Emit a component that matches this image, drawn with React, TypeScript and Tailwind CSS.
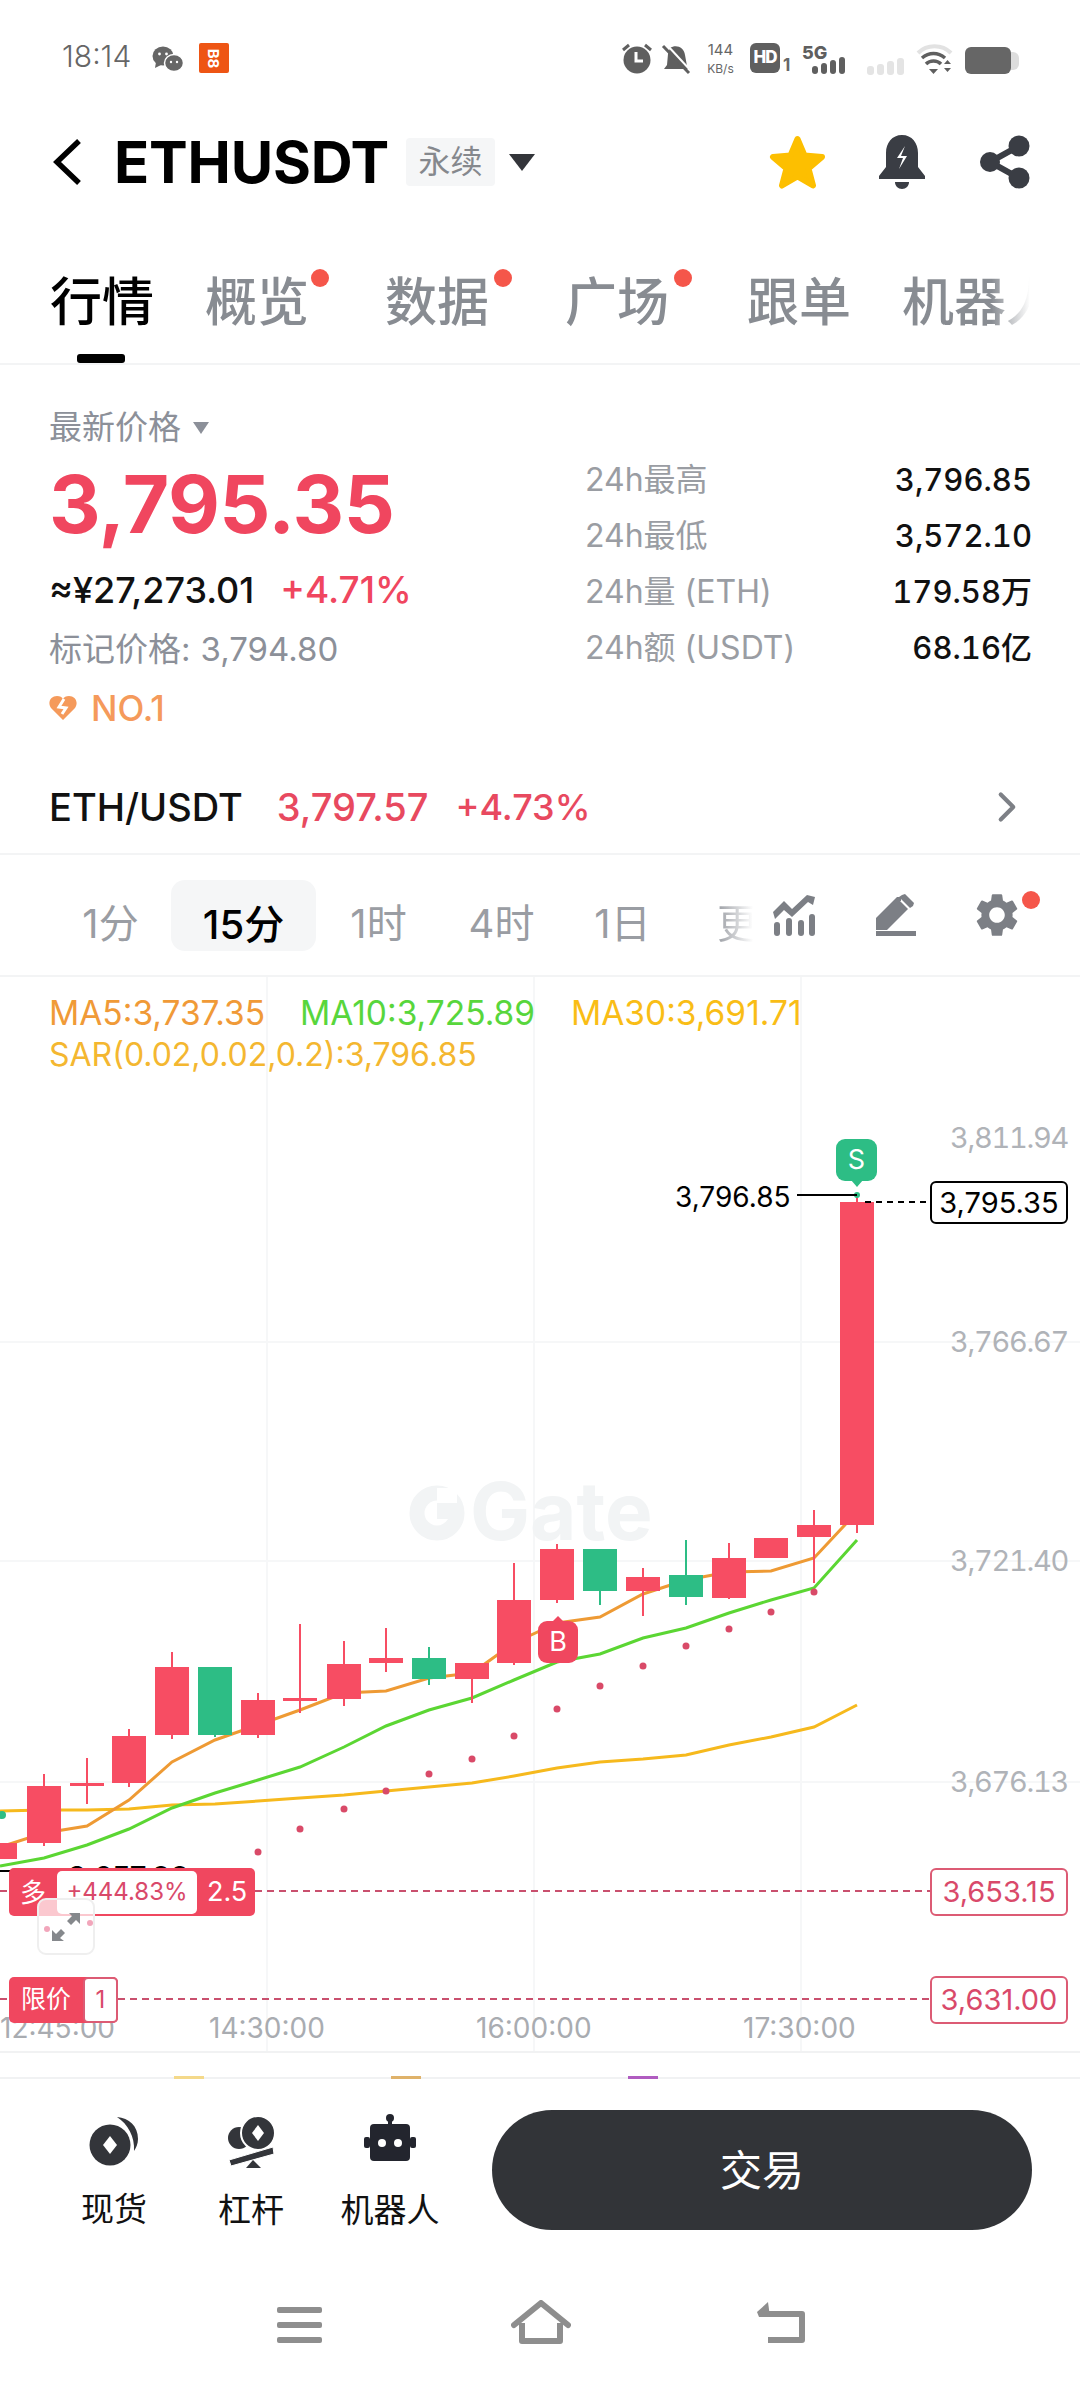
import React from 'react';
import { ChevronRight } from 'lucide-react';
import { MdSettings } from 'react-icons/md';

const RED = '#f74d63';
const GREEN = '#2dbd85';

// x, bodyTop, bodyBottom, wickTop, wickBottom, green?
const candles: [number, number, number, number, number, boolean?][] = [
  [0, 1843, 1859, 1843, 1859],
  [44, 1786, 1843, 1774, 1846],
  [87, 1783, 1786, 1758, 1804],
  [129, 1736, 1783, 1729, 1787],
  [172, 1667, 1735, 1652, 1739],
  [215, 1667, 1735, 1667, 1737, true],
  [258, 1700, 1735, 1693, 1738],
  [300, 1698, 1700, 1624, 1713],
  [344, 1664, 1699, 1641, 1706],
  [386, 1658, 1663, 1628, 1672],
  [429, 1658, 1679, 1647, 1685, true],
  [472, 1663, 1679, 1663, 1703],
  [514, 1600, 1663, 1563, 1665],
  [557, 1549, 1600, 1544, 1603],
  [600, 1549, 1591, 1549, 1605, true],
  [643, 1577, 1591, 1568, 1616],
  [686, 1575, 1597, 1540, 1605, true],
  [729, 1558, 1598, 1543, 1599],
  [771, 1538, 1558, 1538, 1558],
  [814, 1525, 1537, 1510, 1583],
  [857, 1202, 1525, 1195, 1533],
];

const xs = [0, 44, 87, 129, 172, 215, 258, 300, 344, 386, 429, 472, 514, 557, 600, 643, 686, 729, 771, 814, 857];
const ma5 = [1847, 1833, 1826, 1800, 1762, 1740, 1725, 1710, 1693, 1691, 1678, 1673, 1643, 1623, 1617, 1594, 1580, 1572, 1571, 1558, 1512];
const ma10 = [1866, 1858, 1845, 1829, 1808, 1793, 1780, 1767, 1747, 1726, 1710, 1698, 1680, 1662, 1654, 1638, 1628, 1613, 1600, 1588, 1540];
const ma30 = [1811, 1810, 1810, 1809, 1805, 1804, 1801, 1798, 1795, 1791, 1787, 1783, 1776, 1768, 1762, 1759, 1755, 1745, 1737, 1727, 1705];
const sar: [number, number][] = [
  [258, 1852], [300, 1829], [344, 1809], [386, 1791], [429, 1774], [472, 1759], [514, 1736], [557, 1709],
  [600, 1686], [643, 1666], [686, 1646], [729, 1629], [771, 1612], [814, 1592],
];

const toPoints = (ys: number[]) => ys.map((y, i) => `${xs[i]},${y}`).join(' ');

const stats = [
  ['24h最高', '3,796.85'],
  ['24h最低', '3,572.10'],
  ['24h量 (ETH)', '179.58万'],
  ['24h额 (USDT)', '68.16亿'],
];

const StatusBar = () => (
  <div className="flex h-[110px] items-start pt-[43px] pl-[62px] text-[#666]">
    <span className="w-[90px] text-[30px] leading-[26px] font-light">18:14</span>
    <svg width="32" height="28" viewBox="0 0 32 28" className="mt-[3px] fill-[#666]">
      <ellipse cx="11" cy="10" rx="10.5" ry="9.5" />
      <path d="M4 16l-1 6 6-3z" />
      <ellipse cx="22" cy="17" rx="9.5" ry="8.5" stroke="#fff" strokeWidth="1.5" />
      <circle cx="7.5" cy="8" r="1.4" fill="#fff" />
      <circle cx="14.5" cy="8" r="1.4" fill="#fff" />
      <circle cx="19" cy="16" r="1.2" fill="#fff" />
      <circle cx="25" cy="16" r="1.2" fill="#fff" />
    </svg>
    <div className="ml-[15px] flex h-[30px] w-[30px] items-center justify-center rounded-[2px] bg-[#ee5514] text-[15px] leading-none font-bold text-white">
      <span className="rotate-90">B8</span>
    </div>
    <svg width="70" height="32" viewBox="0 0 70 32" className="ml-[393px] fill-[#5f5f5f]">
      <circle cx="15" cy="17" r="13.5" />
      <path d="M14 9v9h7" fill="none" stroke="#fff" strokeWidth="3" />
      <path d="M1 7l6-5M29 7l-6-5" stroke="#5f5f5f" strokeWidth="3" />
      <path d="M48 5c6-4 14-1 15 7l2 11 3 3H42l3-4 1-11z" />
      <path d="M41 3l26 27" stroke="#5f5f5f" strokeWidth="3" />
      <path d="M45 2l25 27" stroke="#fff" strokeWidth="2" />
    </svg>
    <div className="ml-[12px] flex w-[33px] flex-col items-center text-[#666]">
      <span className="mt-[-2px] text-[15px] leading-[18px]">144</span>
      <span className="mt-[3px] text-[12px] leading-[14px]">KB/s</span>
    </div>
    <div className="ml-[13px] flex h-[30px] w-[30px] items-center justify-center rounded-[6px] bg-[#5f5f5f] text-[17px] font-extrabold tracking-[-1px] text-white">
      HD
    </div>
    <span className="mt-[12px] ml-[3px] text-[17px] leading-[20px] font-bold">1</span>
    <svg width="46" height="32" viewBox="0 0 46 32" className="ml-[12px]">
      <text x="0" y="16" fontSize="18" fontWeight="800" fill="#5f5f5f" fontFamily="Inter">5G</text>
      <g fill="#5f5f5f">
        <rect x="10" y="23" width="6" height="8" rx="3" />
        <rect x="19" y="20" width="6" height="11" rx="3" />
        <rect x="28" y="17" width="6" height="14" rx="3" />
        <rect x="37" y="14" width="6" height="17" rx="3" />
      </g>
    </svg>
    <svg width="38" height="18" viewBox="0 0 38 18" className="mt-[14px] ml-[19px] fill-[#e4e4e4]">
      <rect x="0" y="9" width="7" height="9" rx="3" />
      <rect x="10" y="7" width="7" height="11" rx="3" />
      <rect x="20" y="4" width="7" height="14" rx="3" />
      <rect x="30" y="1" width="7" height="17" rx="3" />
    </svg>
    <svg width="38" height="32" viewBox="0 0 38 32" className="ml-[11px]" fill="none">
      <path d="M2 10c9-9 24-9 33 0" stroke="#e2e2e2" strokeWidth="4" />
      <path d="M6 15c7-6 16-6 23 0M10 21c4-4 11-4 15 0" stroke="#5f5f5f" strokeWidth="3.5" />
      <path d="M13 26h9l-4.500 5z" fill="#5f5f5f" />
      <path d="M28 21l3.500-4 3.500 4zM28 25h7l-3.500 4z" fill="#5f5f5f" />
    </svg>
    <div className="mt-[4px] ml-[11px] flex items-center">
      <div className="h-[27px] w-[46px] rounded-[6px] bg-[#666]" />
      <div className="h-[18px] w-[8px] rounded-r-[6px] bg-[#ddd]" />
    </div>
  </div>
);

const Header = () => (
  <div className="flex h-[104px] items-center pr-[50px]">
    <svg width="30" height="48" viewBox="0 0 30 48" className="ml-[52px] shrink-0" fill="none" stroke="#000" strokeWidth="5.500">
      <path d="M27 3L5 24l22 21" />
    </svg>
    <h1 className="ml-[32px] text-[58px] leading-none font-bold tracking-[-0.2px] text-black">ETHUSDT</h1>
    <span className="ml-[17px] flex h-[48px] w-[89px] items-center justify-center rounded-[4px] bg-[#f5f6f7] text-[32px] text-[#85888d]">
      永续
    </span>
    <svg width="26" height="17" viewBox="0 0 26 17" className="ml-[14px] fill-[#33353a]">
      <path d="M0 0h26L13 17z" />
    </svg>
    <svg width="57" height="54" viewBox="0 0 57 54" className="mr-[52px] ml-auto">
      <path
        d="M28.500 4l7 16.500 17.500 1.500-13.500 11.500 4.500 17-15.500-9-15.500 9 4.500-17L4 22l17.500-1.500z"
        fill="#fdbf00"
        stroke="#fdbf00"
        strokeWidth="6"
        strokeLinejoin="round"
      />
    </svg>
    <svg width="48" height="54" viewBox="0 0 48 54" className="mr-[54px]">
      <path d="M24 0c10 0 16 8 16 18v14l7 9v3H1v-3l7-9V18C8 8 14 0 24 0z" fill="#3a3d44" />
      <path d="M17 47h14c0 4-3 7-7 7s-7-3-7-7z" fill="#3a3d44" />
      <path d="M27 11l-8 12h6l-4 11 8-13h-6z" fill="#fff" />
    </svg>
    <svg width="50" height="54" viewBox="0 0 50 54" fill="#3a3d44">
      <path d="M39 11L10 27l29 16" fill="none" stroke="#3a3d44" strokeWidth="6" />
      <circle cx="39" cy="11" r="10.500" />
      <circle cx="10" cy="27" r="10" />
      <circle cx="39" cy="43" r="10.500" />
    </svg>
  </div>
);

const Tabs = () => (
  <div className="relative flex h-[151px] items-start overflow-hidden border-b-2 border-[#f3f4f5] pt-[62px] pl-[50px] text-[52px] leading-[54px] font-medium text-[#888c92]">
    <div className="w-[155px] text-black">行情</div>
    <div className="relative w-[180px]">
      概览
      <span className="absolute top-[-7px] left-[106px] h-[18px] w-[18px] rounded-full bg-[#f5564a]" />
    </div>
    <div className="relative w-[180px]">
      数据
      <span className="absolute top-[-7px] left-[109px] h-[18px] w-[18px] rounded-full bg-[#f5564a]" />
    </div>
    <div className="relative w-[182px]">
      广场
      <span className="absolute top-[-7px] left-[109px] h-[18px] w-[18px] rounded-full bg-[#f5564a]" />
    </div>
    <div className="w-[155px]">跟单</div>
    <div className="w-[128px] shrink-0 overflow-hidden whitespace-nowrap bg-gradient-to-r from-[#888c92] from-70% to-transparent to-100% bg-clip-text text-transparent">
      机器人
    </div>
    <div className="absolute bottom-0 left-[77px] h-[9px] w-[48px] rounded-[3px] bg-black" />
  </div>
);

const PriceBlock = () => (
  <div className="flex h-[396px] justify-between pt-[36px] pr-[48px] pl-[49px]">
    <div>
      <div className="flex h-[48px] translate-y-[3px] items-center text-[33px] text-[#8c9099]">
        最新价格
        <svg width="16" height="12" viewBox="0 0 16 12" className="ml-[12px] fill-[#8c9099]">
          <path d="M0 0h16L8 12z" />
        </svg>
      </div>
      <div className="flex h-[110px] items-center text-[80px] leading-none font-bold tracking-[-0.5px] text-[#f0465f]">
        3,795.35
      </div>
      <div className="flex h-[62px] items-center text-[36px] font-medium text-[#111]">
        ≈¥27,273.01
        <span className="ml-[26px] text-[37px] text-[#f0465f]">+4.71%</span>
      </div>
      <div className="flex h-[58px] items-center text-[33px] text-[#8c9099]">
        标记价格:
        <span className="ml-[10px] text-[33px]">3,794.80</span>
      </div>
      <div className="flex h-[58px] items-center text-[35px] font-medium text-[#f59a5b]">
        <svg width="28" height="26" viewBox="0 0 28 26" className="mr-[14px]">
          <path d="M14 25L2 13C-2 7 2 1 8 1c3 0 5 1 6 3 1-2 3-3 6-3 6 0 10 6 6 12z" fill="#f59a5b" />
          <path d="M15 4l-5 8 7 1-4 6" fill="none" stroke="#fff" strokeWidth="3" />
        </svg>
        NO.1
      </div>
    </div>
    <div className="w-[447px] pt-[51px]">
      {stats.map(([label, value]) => (
        <div key={label} className="flex h-[56px] items-center justify-between">
          <span className="text-[32px] text-[#9a9da3]">{label}</span>
          <span className="text-[31px] font-medium text-[#111] tabular-nums">{value}</span>
        </div>
      ))}
    </div>
  </div>
);

const PairRow = () => (
  <div className="flex h-[94px] items-center border-b-2 border-[#f3f4f5] pr-[48px] pl-[49px] text-[38px] font-medium">
    <span className="text-[#111]">ETH/USDT</span>
    <span className="ml-[34px] text-[#e8495f]">3,797.57</span>
    <span className="ml-[27px] text-[36px] text-[#e8495f]">+4.73%</span>
    <ChevronRight size={50} strokeWidth={2} className="ml-auto text-[#7d8086]" />
  </div>
);

const Intervals = () => (
  <div className="relative flex h-[122px] items-center border-b-2 border-[#f3f4f5] pl-[50px] text-[40px] text-[#9a9da3]">
    <div className="w-[121px] pt-[18px] text-center">1分</div>
    <div className="h-[71px] w-[145px] rounded-[14px] bg-[#f5f6f7] pt-[10px] text-center leading-[70px] font-medium text-black">
      15分
    </div>
    <div className="w-[125px] pt-[18px] text-center">1时</div>
    <div className="w-[121px] pt-[18px] text-center">4时</div>
    <div className="w-[121px] pt-[18px] text-center">1日</div>
    <div className="ml-[34px] w-[36px] overflow-hidden bg-gradient-to-r from-[#9a9da3] to-transparent bg-clip-text pt-[18px] whitespace-nowrap text-transparent">
      更多
    </div>
    <svg width="44" height="42" viewBox="0 0 44 42" className="ml-[19px]" fill="#7c7f85">
      <path d="M1 18l11-11 8 8L35 1l8 2-2 8-5-3-16 15-8-7-9 9z" />
      <rect x="2" y="28" width="6" height="14" rx="3" />
      <rect x="14" y="24" width="6" height="18" rx="3" />
      <rect x="26" y="26" width="6" height="16" rx="3" />
      <rect x="37" y="20" width="6" height="22" rx="3" />
    </svg>
    <svg width="42" height="42" viewBox="0 0 42 42" className="ml-[58px]" fill="#7c7f85">
      <path d="M2 24L23 3l4 0 0 4-1 0 8 8L13 36H2z" />
      <path d="M28 1l3-1 9 9-1 3-3 2-11-11z" />
      <rect x="2" y="37" width="40" height="5" />
    </svg>
    <MdSettings size={52} className="ml-[55px] text-[#7c7f85]" />
    <span className="absolute top-[36px] left-[1022px] h-[18px] w-[18px] rounded-full bg-[#f5564a]" />
  </div>
);

const YLabel = ({ top, text }: { top: string; text: string }) => (
  <span className={`absolute right-[12px] text-[29px] leading-[32px] tracking-[-1.3px] text-[#b0b3b8] tabular-nums ${top}`}>{text}</span>
);

const TimeLabel = ({ left, text }: { left: string; text: string }) => (
  <span className={`absolute top-[1035px] text-[28px] leading-[32px] text-[#a9acb1] ${left}`}>{text}</span>
);

const Chart = () => (
  <div className="relative h-[1102px] overflow-hidden">
    <svg width="1080" height="1102" viewBox="0 977 1080 1102" className="absolute top-0 left-0">
      <g stroke="#f6f7f8" strokeWidth="2">
        <path d="M267 977V2052M534 977V2052M801 977V2052" />
        <path d="M0 1342H1080M0 1561H1080M0 1782H1080" />
      </g>
      <path d="M0 2052H1080M0 2078H1080" stroke="#f1f2f3" strokeWidth="2" />
      <path d="M174 2077.500h30" stroke="#f4d98a" strokeWidth="3" />
      <path d="M391 2077.500h30" stroke="#dfb26a" strokeWidth="3" />
      <path d="M628 2077.500h30" stroke="#b05cc0" strokeWidth="3" />

      <circle cx="437" cy="1513" r="20" fill="none" stroke="#f2f4f5" strokeWidth="15" />
      <rect x="437" y="1488" width="20" height="20" fill="#fff" />
      <rect x="437" y="1503" width="22" height="16" fill="#f2f4f5" />
      <text x="470" y="1540" fontFamily="Inter" fontWeight="700" fontSize="80" fill="#f2f4f5">Gate</text>

      <polyline points={toPoints(ma30)} fill="none" stroke="#f6b91d" strokeWidth="3" />
      <polyline points={toPoints(ma5)} fill="none" stroke="#ee9a34" strokeWidth="3" />
      <polyline points={toPoints(ma10)} fill="none" stroke="#5bd633" strokeWidth="3" />

      {candles.map(([x, top, bottom, wickTop, wickBottom, up]) => (
        <g key={x} fill={up ? GREEN : RED} stroke="none">
          <rect x={x - 1} y={wickTop} width="2" height={wickBottom - wickTop} />
          <rect x={x - 17} y={top} width="34" height={Math.max(bottom - top, 3)} />
        </g>
      ))}

      {sar.map(([x, y]) => (
        <circle key={x} cx={x} cy={y} r="3.500" fill="#d94a68" />
      ))}
      <circle cx="2" cy="1815" r="4" fill={GREEN} />
      <circle cx="857" cy="1195" r="3" fill={GREEN} />

      <path d="M797 1195h60" stroke="#000" strokeWidth="2" />
      <path d="M865 1202h65" stroke="#000" strokeWidth="2" strokeDasharray="6 5" />
      <path d="M0 1871h10" stroke="#000" strokeWidth="2" />
      <path d="M0 1891h10M255 1891h675" stroke="#c9506e" strokeWidth="2" strokeDasharray="7 5" />
      <path d="M0 1999h10M118 1999h812" stroke="#c9506e" strokeWidth="2" strokeDasharray="7 5" />
    </svg>

    <div className="relative px-[49px] pt-[15px] text-[33.500px] leading-[42px]">
      <div className="flex">
        <span className="w-[251px] text-[#f09a37]">MA5:3,737.35</span>
        <span className="w-[271px] text-[#58d63c]">MA10:3,725.89</span>
        <span className="text-[#f9bd16]">MA30:3,691.71</span>
      </div>
      <div className="text-[32px] text-[#f4b730]">SAR(0.02,0.02,0.2):3,796.85</div>
    </div>

    <YLabel top="top-[145px]" text="3,811.94" />
    <YLabel top="top-[349px]" text="3,766.67" />
    <YLabel top="top-[568px]" text="3,721.40" />
    <YLabel top="top-[789px]" text="3,676.13" />

    <span className="absolute top-[203px] left-[675px] text-[28px] leading-[34px] text-black">3,796.85</span>

    <div className="absolute top-[162px] left-[836px] flex h-[42px] w-[41px] items-center justify-center rounded-[9px] bg-[#2dbd85] text-[27px] text-white">
      S
      <span className="absolute bottom-[-6px] left-[15px] h-0 w-0 border-x-[6px] border-t-[7px] border-x-transparent border-t-[#2dbd85]" />
    </div>

    <div className="absolute top-[644px] left-[538px] flex h-[42px] w-[40px] items-center justify-center rounded-[9px] bg-[#f0475f] text-[27px] text-white">
      B
      <span className="absolute top-[-5px] left-[14px] h-0 w-0 border-x-[6px] border-b-[6px] border-x-transparent border-b-[#f0475f]" />
    </div>

    <div className="absolute top-[204px] left-[930px] flex h-[43px] w-[138px] items-center justify-center rounded-[6px] border-2 border-black bg-white text-[29px] text-black">
      3,795.35
    </div>

    <div className="absolute top-[891px] left-[930px] flex h-[48px] w-[138px] items-center justify-center rounded-[6px] border-2 border-[#dc5b74] bg-white text-[29px] text-[#d9496a]">
      3,653.15
    </div>
    <div className="absolute top-[999px] left-[930px] flex h-[48px] w-[138px] items-center justify-center rounded-[6px] border-2 border-[#dc5b74] bg-white text-[29px] text-[#d9496a]">
      3,631.00
    </div>

    <TimeLabel left="left-0" text="12:45:00" />
    <TimeLabel left="left-[209px]" text="14:30:00" />
    <TimeLabel left="left-[476px]" text="16:00:00" />
    <TimeLabel left="left-[743px]" text="17:30:00" />

    <span className="absolute top-[883px] left-[68px] text-[28px] leading-[34px] font-bold text-black">3,657.00</span>

    <div className="absolute top-[891px] left-[9px] flex h-[48px] w-[246px] items-center rounded-[5px] bg-[#f0475f] text-white">
      <span className="w-[48px] text-center text-[26px]">多</span>
      <span className="flex h-[43px] w-[140px] items-center justify-center rounded-[5px] bg-white text-[24px] text-[#d9496a]">
        +444.83%
      </span>
      <span className="ml-[10px] text-[27px]">2.5</span>
    </div>

    <div className="absolute top-[921px] left-[37px] flex h-[57px] w-[58px] items-center justify-center rounded-[9px] border-2 border-[#efefef] bg-white/70">
      <span className="absolute top-[26px] left-[5px] h-[6px] w-[6px] rounded-full bg-[#f2a6bb]" />
      <span className="absolute top-[20px] left-[48px] h-[6px] w-[6px] rounded-full bg-[#f2a6bb]" />
      <svg width="30" height="30" viewBox="0 0 30 30" fill="#85888c">
        <path d="M18 1h11v11l-4-4-5 5-4-4 5-5zM1 18l4 4 5-5 4 4-5 5 4 3H1z" />
      </svg>
    </div>

    <div className="absolute top-[1000px] left-[9px] flex h-[46px] w-[109px] items-center rounded-[5px] bg-[#f0475f] text-white">
      <span className="w-[74px] text-center text-[25px]">限价</span>
      <span className="flex h-[46px] w-[35px] items-center justify-center rounded-[5px] border-2 border-[#dc5b74] bg-white text-[24px] text-[#d9496a]">
        1
      </span>
    </div>
  </div>
);

const BottomBar = () => (
  <div className="h-[309px]">
    <div className="flex h-[151px] pt-[31px] pr-[48px]">
      <div className="flex w-[172px] flex-col items-center pl-[56px]">
        <svg width="50" height="50" viewBox="0 0 50 50" className="mt-[6px]" fill="#33353a">
          <path d="M28 1c12 1 21 9 21 22 0 5-2 9-4 12 1-14-6-27-17-34z" />
          <circle cx="21" cy="29" r="20.500" />
          <path d="M21 20l7 9-7 9-7-9z" fill="#fff" />
        </svg>
        <span className="mt-[24px] text-[33px] leading-[38px] whitespace-nowrap text-[#111]">现货</span>
      </div>
      <div className="ml-[11px] flex w-[136px] flex-col items-center">
        <svg width="50" height="52" viewBox="0 0 50 52" className="mt-[6px]" fill="#33353a">
          <circle cx="13" cy="22" r="11" />
          <circle cx="32" cy="17" r="17" stroke="#fff" strokeWidth="2" />
          <path d="M32 9l6 8-6 8-6-8z" fill="#fff" />
          <path d="M3 44L47 31l1 7L5 50z" stroke="#fff" strokeWidth="1" />
          <path d="M20 52l7-8 8 8z" />
        </svg>
        <span className="mt-[23px] text-[33px] leading-[38px] whitespace-nowrap text-[#111]">杠杆</span>
      </div>
      <div className="ml-[3px] flex w-[136px] flex-col items-center">
        <svg width="52" height="48" viewBox="0 0 52 48" className="mt-[4px]" fill="#23252e">
          <circle cx="26" cy="4" r="4" />
          <rect x="24" y="4" width="4" height="8" />
          <rect x="6" y="10" width="40" height="37" rx="4" />
          <rect x="0" y="23" width="6" height="11" rx="2" />
          <rect x="46" y="23" width="6" height="11" rx="2" />
          <circle cx="18" cy="29" r="4" fill="#fff" />
          <circle cx="34" cy="29" r="4" fill="#fff" />
        </svg>
        <span className="mt-[29px] text-[33px] leading-[38px] whitespace-nowrap text-[#111]">机器人</span>
      </div>
      <button className="ml-auto h-[120px] w-[540px] rounded-full bg-[#323438] text-[42px] text-white">交易</button>
    </div>
    <div className="relative flex h-[158px] items-start pt-[77px] pl-[277px]">
      <div className="flex h-[36px] w-[45px] flex-col justify-between">
        <div className="h-[6px] rounded-[2px] bg-[#8e8e8e]" />
        <div className="h-[6px] rounded-[2px] bg-[#8e8e8e]" />
        <div className="h-[6px] rounded-[2px] bg-[#8e8e8e]" />
      </div>
      <svg width="60" height="44" viewBox="0 0 60 44" className="mt-[-7px] ml-[189px]" fill="none" stroke="#8e8e8e" strokeWidth="6">
        <path d="M3 25L30 3l27 22" strokeLinejoin="round" strokeLinecap="round" />
        <path d="M11 23v18h38V23" strokeLinejoin="round" />
      </svg>
      <svg width="50" height="44" viewBox="0 0 50 44" className="mt-[-7px] ml-[185px]" fill="none" stroke="#8e8e8e" strokeWidth="6">
        <path d="M8 14h38v26H12" strokeLinejoin="round" />
        <path d="M12 2L1 12l2 5h11z" fill="#8e8e8e" stroke="none" />
      </svg>
    </div>
  </div>
);

export default function App() {
  return (
    <div className="h-[2388px] w-[1080px] overflow-hidden bg-white font-['Inter','Noto_Sans_CJK_SC',sans-serif]">
      <StatusBar />
      <Header />
      <Tabs />
      <PriceBlock />
      <PairRow />
      <Intervals />
      <Chart />
      <BottomBar />
    </div>
  );
}
